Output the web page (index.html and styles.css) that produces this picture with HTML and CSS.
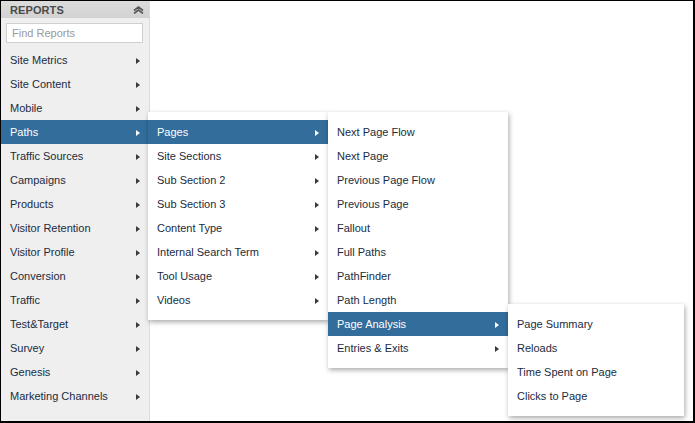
FILE: index.html
```html
<!DOCTYPE html>
<html>
<head>
<meta charset="utf-8">
<link rel="stylesheet" href="styles.css">
</head>
<body>
<div class="frame">
  <aside class="sidebar">
    <div class="side-head">
      <span class="side-title">REPORTS</span>
      <svg class="collapse" width="11" height="8" viewBox="0 0 11 8"><path d="M1 4.5 L5.5 1 L10 4.5 M1 7.5 L5.5 4 L10 7.5" fill="none" stroke="#555" stroke-width="1.6"/></svg>
    </div>
    <div class="search-wrap"><input class="search" type="text" placeholder="Find Reports"></div>
    <ul class="menu side-menu">
      <li class="item"><span>Site Metrics</span><i class="arr"></i></li>
      <li class="item"><span>Site Content</span><i class="arr"></i></li>
      <li class="item"><span>Mobile</span><i class="arr"></i></li>
      <li class="item active"><span>Paths</span><i class="arr"></i>
        <ul class="menu flyout f1">
          <li class="item active"><span>Pages</span><i class="arr"></i>
            <ul class="menu flyout f2">
              <li class="item"><span>Next Page Flow</span></li>
              <li class="item"><span>Next Page</span></li>
              <li class="item"><span>Previous Page Flow</span></li>
              <li class="item"><span>Previous Page</span></li>
              <li class="item"><span>Fallout</span></li>
              <li class="item"><span>Full Paths</span></li>
              <li class="item"><span>PathFinder</span></li>
              <li class="item"><span>Path Length</span></li>
              <li class="item active"><span>Page Analysis</span><i class="arr"></i>
                <ul class="menu flyout f3">
                  <li class="item"><span>Page Summary</span></li>
                  <li class="item"><span>Reloads</span></li>
                  <li class="item"><span>Time Spent on Page</span></li>
                  <li class="item"><span>Clicks to Page</span></li>
                </ul>
              </li>
              <li class="item"><span>Entries &amp; Exits</span><i class="arr"></i></li>
            </ul>
          </li>
          <li class="item"><span>Site Sections</span><i class="arr"></i></li>
          <li class="item"><span>Sub Section 2</span><i class="arr"></i></li>
          <li class="item"><span>Sub Section 3</span><i class="arr"></i></li>
          <li class="item"><span>Content Type</span><i class="arr"></i></li>
          <li class="item"><span>Internal Search Term</span><i class="arr"></i></li>
          <li class="item"><span>Tool Usage</span><i class="arr"></i></li>
          <li class="item"><span>Videos</span><i class="arr"></i></li>
        </ul>
      </li>
      <li class="item"><span>Traffic Sources</span><i class="arr"></i></li>
      <li class="item"><span>Campaigns</span><i class="arr"></i></li>
      <li class="item"><span>Products</span><i class="arr"></i></li>
      <li class="item"><span>Visitor Retention</span><i class="arr"></i></li>
      <li class="item"><span>Visitor Profile</span><i class="arr"></i></li>
      <li class="item"><span>Conversion</span><i class="arr"></i></li>
      <li class="item"><span>Traffic</span><i class="arr"></i></li>
      <li class="item"><span>Test&amp;Target</span><i class="arr"></i></li>
      <li class="item"><span>Survey</span><i class="arr"></i></li>
      <li class="item"><span>Genesis</span><i class="arr"></i></li>
      <li class="item"><span>Marketing Channels</span><i class="arr"></i></li>
    </ul>
  </aside>
  <main class="content"></main>
</div>
</body>
</html>
```
FILE: styles.css
```css
* { box-sizing: border-box; }
html, body { margin: 0; padding: 0; background: #fff; }
body {
  font-family: "Liberation Sans", Arial, Helvetica, sans-serif;
  font-size: 11px;
  color: #1a2c40;
}
.frame {
  width: 695px;
  height: 423px;
  border-style: solid;
  border-color: #000;
  border-width: 1px 2px 2px 1px;
  display: flex;
  overflow: hidden;
  background: #fff;
}
.sidebar {
  width: 149px;
  flex: none;
  background: #efefef;
  border-right: 1px solid #dcdcdc;
  position: relative;
  z-index: 2;
}
.side-head {
  height: 17px;
  background: linear-gradient(#dcdcdc, #d2d2d2);
  display: flex;
  align-items: center;
  justify-content: space-between;
  padding: 0 5px 0 9px;
}
.side-title {
  font-weight: bold;
  color: #4a4a4a;
  font-size: 11px;
  letter-spacing: 0.1px;
}
.collapse { display: block; margin-top: 1px; }
.search-wrap { padding: 5px 6px 5px 5px; }
.search {
  display: block;
  width: 137px;
  height: 20px;
  border: 1px solid #cfcfcf;
  background: #fff;
  font-family: inherit;
  font-size: 11px;
  padding: 0 5px;
  outline: none;
}
.search::placeholder { color: #9a9a9a; }
.menu { list-style: none; margin: 0; padding: 0; }
.item {
  position: relative;
  height: 24px;
  display: flex;
  align-items: center;
  justify-content: space-between;
  padding: 0 9px 0 9px;
  color: #1a2c40;
  white-space: nowrap;
}
.item.active { background: #326d9b; }
.item.active > span { color: #fff; }
.arr {
  width: 0;
  height: 0;
  border-top: 3.5px solid transparent;
  border-bottom: 3.5px solid transparent;
  border-left: 4px solid #3a3a3a;
  margin-top: 2px;
}
.item.active > .arr { border-left-color: #fff; }
.flyout {
  position: absolute;
  top: -8px;
  background: #fff;
  padding: 8px 0;
  box-shadow: 1px 2px 5px rgba(0, 0, 0, 0.35);
  z-index: 3;
}
.f1 { left: 147px; width: 180px; }
.f2 { left: 180px; width: 180px; }
.f3 { left: 180px; width: 176px; }
.content { flex: 1; background: #fff; }
```
